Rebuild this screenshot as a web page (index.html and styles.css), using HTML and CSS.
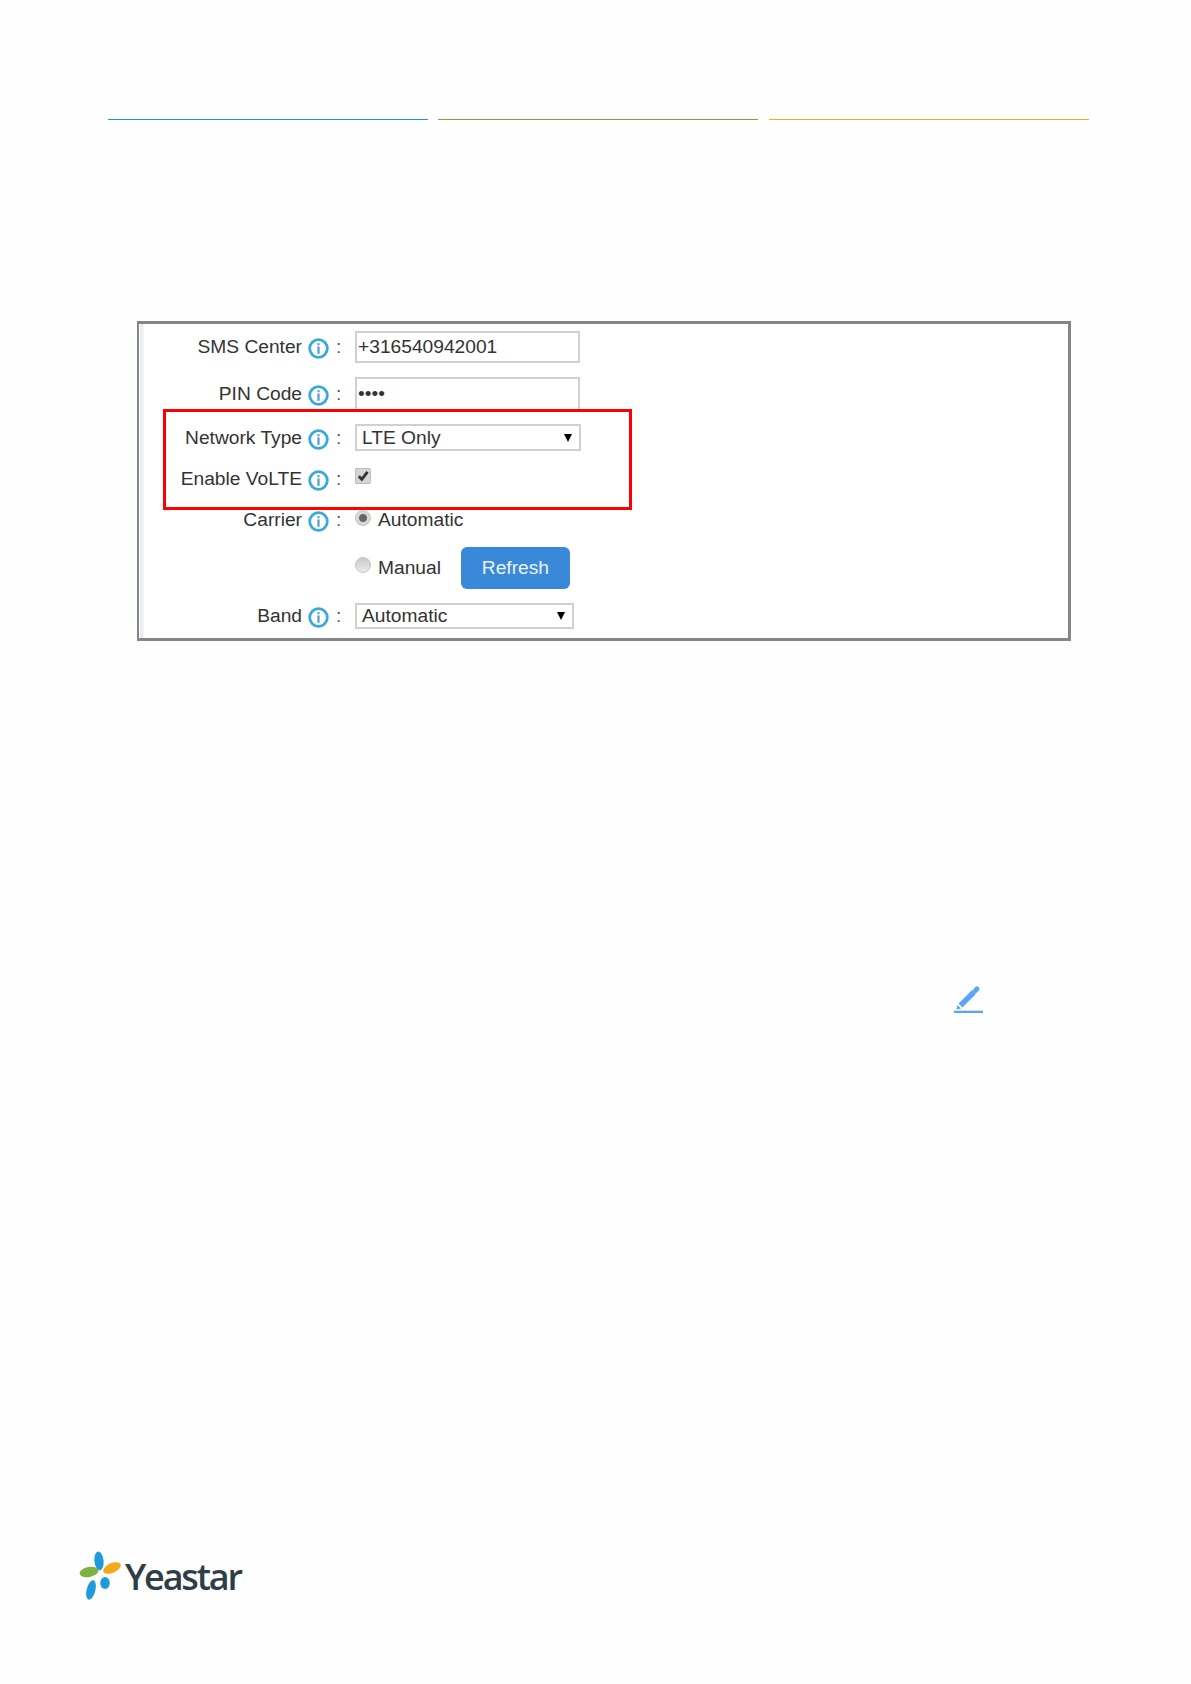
FILE: index.html
```html
<!doctype html>
<html>
  <head>
    <title>LTE settings</title>
    <link rel="stylesheet" href="styles.css">
  </head>

  <body>
    <svg width="0" height="0" class="defs">
      <defs>
        <g id="info">
          <circle cx="10.5" cy="10.5" r="8.8" fill="none" stroke="#3aa9d8" stroke-width="2.800"/>
          <rect x="9.400" y="8.400" width="2.200" height="7.400" fill="#4f9fc9"/>
          <rect x="9.400" y="5.200" width="2.200" height="2" fill="#4f9fc9"/>
        </g>
      </defs>
    </svg>

    <!--Coloured rules at the top of the page-->
    <div class="rules">
      <div class="rule blue"></div>
      <div class="rule green"></div>
      <div class="rule orange"></div>
    </div>

    <!--Settings form-->
    <div class="frame">
      <div class="row sms">
        <span class="label">SMS Center</span>
        <svg class="info" viewBox="0 0 21 21"><use href="#info"/></svg>
        <span class="colon">:</span>
        <div class="input">+316540942001</div>
      </div>
      <div class="row pin">
        <span class="label">PIN Code</span>
        <svg class="info" viewBox="0 0 21 21"><use href="#info"/></svg>
        <span class="colon">:</span>
        <div class="input dots">••••</div>
      </div>

      <div class="highlight">
        <div class="row network">
          <span class="label">Network Type</span>
          <svg class="info" viewBox="0 0 21 21"><use href="#info"/></svg>
          <span class="colon">:</span>
          <div class="select wide">LTE Only<i class="arrow"></i></div>
        </div>
        <div class="row volte">
          <span class="label">Enable VoLTE</span>
          <svg class="info" viewBox="0 0 21 21"><use href="#info"/></svg>
          <span class="colon">:</span>
          <span class="checkbox">
            <svg viewBox="0 0 16 16" width="16" height="16"><path d="M3.800 8.300l3 3 5.700-7.500" fill="none" stroke="#333" stroke-width="2.800"/></svg>
          </span>
        </div>
      </div>

      <div class="row carrier">
        <span class="label">Carrier</span>
        <svg class="info" viewBox="0 0 21 21"><use href="#info"/></svg>
        <span class="colon">:</span>
        <span class="radio checked"></span>
        <span class="option">Automatic</span>
      </div>
      <div class="row manual">
        <span class="label"></span>
        <span class="info"></span>
        <span class="colon"></span>
        <span class="radio"></span>
        <span class="option">Manual</span>
        <a class="btn">Refresh</a>
      </div>
      <div class="row band">
        <span class="label">Band</span>
        <svg class="info" viewBox="0 0 21 21"><use href="#info"/></svg>
        <span class="colon">:</span>
        <div class="select">Automatic<i class="arrow"></i></div>
      </div>
    </div>

    <!--Edit icon-->
    <svg class="pencil" viewBox="0 0 30 28" width="30" height="28">
      <path d="M7.500 20.500L21 7" stroke="#5aa6f4" stroke-width="5.500" fill="none"/>
      <path d="M22.500 5.500L24 4" stroke="#5aa6f4" stroke-width="5" stroke-linecap="round" fill="none"/>
      <path d="M3.500 24.500l1-4.500 3.500 3.500z" fill="#5aa6f4"/>
      <path d="M1 27h29" stroke="#5aa6f4" stroke-width="2.600" fill="none"/>
    </svg>

    <!--Logo-->
    <div class="logo">
      <svg viewBox="0 0 46 52" width="46" height="52">
        <ellipse cx="20" cy="11" rx="4.600" ry="9.500" fill="#1f9bd9" transform="rotate(-6 20 11)"/>
        <ellipse cx="33" cy="18" rx="9.500" ry="4.800" fill="#f5a81c" transform="rotate(-24 33 18)"/>
        <ellipse cx="10" cy="22" rx="9.500" ry="5" fill="#7db243" transform="rotate(-10 10 22)"/>
        <ellipse cx="12" cy="40" rx="4.400" ry="10" fill="#1f9bd9" transform="rotate(14 12 40)"/>
        <ellipse cx="26" cy="33" rx="4.800" ry="6" fill="#1f9bd9"/>
      </svg>
      <span class="brand">Yeastar</span>
    </div>
  </body>
</html>
```

FILE: styles.css
```css
body {
  margin:0;
  height:1684px;
  background-color:#fefefe;
  font-family: 'Liberation Sans', Arial, sans-serif;
  font-size:19.2px;
  color:#333;
}

.defs {
  display:block;
  height:0;
}

/* Top rules */
.rules {
  display:flex;
  gap:10px;
  padding:119px 0 0 108px;
}
.rule {
  width:320px;
  height:1px;
}
.rule.blue { background-color:#1b97d3; }
.rule.green { background-color:#77a83f; }
.rule.orange { background-color:#f0ad2c; margin-left:1px; }

/* Form frame */
.frame {
  box-sizing:border-box;
  width:934px;
  margin:201px 0 0 137px;
  padding:7px 0 9px;
  border:3px solid #858585;
  border-left-width:2px;
  background:linear-gradient(90deg, #fff 0, #fff 1px, #e6eef2 1px, #e6eef2 4px, #fff 5px);
}

.row {
  display:flex;
  align-items:center;
}
.label {
  width:163px;
  flex:none;
  text-align:right;
}
.info {
  width:21px;
  height:21px;
  flex:none;
  margin:3px 0 0 6px;
}
.colon {
  width:26px;
  flex:none;
  padding-left:7px;
  box-sizing:border-box;
  color:#555;
}

.sms { height:32px; }
.pin { height:34px; margin-top:14px; }
.carrier { height:21px; margin-top:-1px; }
.manual { height:42px; margin-top:17px; }
.band { height:26px; margin-top:14px; }

.input {
  box-sizing:border-box;
  width:225px;
  height:32px;
  padding-left:1px;
  line-height:28px;
  border:2px solid #d0d0d0;
  background-color:#fff;
}
.pin .input {
  height:34px;
  line-height:30px;
}

.select {
  box-sizing:border-box;
  display:flex;
  align-items:center;
  justify-content:space-between;
  width:219px;
  height:26px;
  padding:0 7px 0 5px;
  border:2px solid #d0d0d0;
  background-color:#fff;
}
.select.wide {
  width:226px;
  height:27px;
}
.arrow {
  width:0;
  height:0;
  border:4.500px solid transparent;
  border-top:8px solid #000;
  border-bottom:0;
}

/* Red box sits over the bottom of the PIN field */
.highlight {
  position:relative;
  box-sizing:border-box;
  width:469px;
  height:101px;
  margin:-2px 0 0 24px;
  padding-top:12px;
  border:3px solid #ff0000;
  background-color:#fff;
}
.highlight .label { width:136px; }
.network { height:27px; }
.volte {
  height:21px;
  margin-top:17px;
}

.checkbox {
  align-self:flex-start;
  width:16px;
  height:16px;
  border-radius:2px;
  background-color:#d6d6d6;
  box-shadow:inset 0 0 0 1px #bdbdbd;
}
.checkbox svg { display:block; }

.radio {
  box-sizing:border-box;
  width:16px;
  height:16px;
  flex:none;
  margin-top:-6px;
  border-radius:50%;
  border:1px solid #c4c4c4;
  background:linear-gradient(#c8c8c8, #ececec);
}
.radio.checked {
  align-self:flex-start;
  margin-top:1px;
  background:radial-gradient(circle, #666 0, #666 3.500px, #d8d8d8 4.500px);
}
.option {
  margin-left:7px;
}

a.btn {
  display:block;
  box-sizing:border-box;
  width:109px;
  height:42px;
  margin-left:20px;
  border-radius:6px;
  background-color:#3a89d9;
  color:#e9f2fb;
  line-height:41px;
  text-align:center;
}

.pencil {
  display:block;
  margin:344px 0 0 953px;
}

/* Footer logo */
.logo {
  display:flex;
  align-items:center;
  margin:537px 0 0 79px;
}
.brand {
  font-family:'Open Sans', sans-serif;
  font-size:36px;
  font-weight:600;
  letter-spacing:-2.200px;
  color:#2f3e46;
}
```
